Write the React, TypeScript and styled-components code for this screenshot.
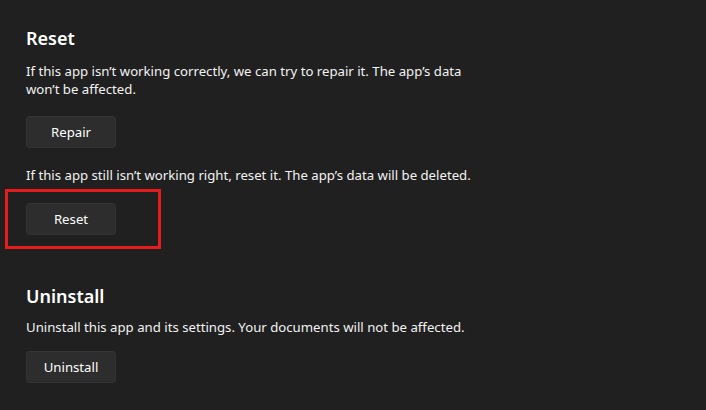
import React from "react";
import styled, { createGlobalStyle } from "styled-components";

const Global = createGlobalStyle`
  html, body { margin: 0; padding: 0; background: #202020; }
  body { font-family: "Noto Sans", "Open Sans", sans-serif; color: #ffffff; }
`;

const Page = styled.div`
  width: 706px;
  height: 410px;
  box-sizing: border-box;
  padding: 24px 26px 0 26px;
  background: #202020;
  display: flex;
  flex-direction: column;
`;

const Section = styled.section<{ $gapTop?: number }>`
  display: flex;
  flex-direction: column;
  align-items: flex-start;
  margin-top: ${(p) => p.$gapTop ?? 0}px;
`;

const Heading = styled.h2`
  margin: 0;
  font-size: 18px;
  line-height: 28px;
  font-weight: 600;
  color: #ffffff;
`;

const Text = styled.p<{ $top: number }>`
  margin: ${(p) => p.$top}px 0 0 0;
  font-size: 13.2px;
  line-height: 18px;
  color: #f2f2f2;
  max-width: 462px;
`;

const ButtonWrap = styled.div<{ $top: number }>`
  position: relative;
  margin-top: ${(p) => p.$top}px;
`;

const Button = styled.button`
  width: 90px;
  height: 32px;
  box-sizing: border-box;
  border-radius: 4px;
  background: #2d2d2d;
  border: 1px solid #323232;
  border-top-color: #363636;
  color: #ffffff;
  font-family: "Noto Sans", "Open Sans", sans-serif;
  font-size: 13.2px;
  display: flex;
  align-items: center;
  justify-content: center;
  padding: 0;
`;

const Highlight = styled.div`
  position: absolute;
  left: -21px;
  top: -14px;
  width: 156px;
  height: 60px;
  box-sizing: border-box;
  border: 3px solid #e61b1b;
  pointer-events: none;
`;

export default function App() {
  return (
    <>
      <Global />
      <Page>
        <Section>
          <Heading>Reset</Heading>
          <Text $top={10}>
            If this app isn’t working correctly, we can try to repair it. The app’s data won’t be affected.
          </Text>
          <ButtonWrap $top={18}>
            <Button>Repair</Button>
          </ButtonWrap>
          <Text $top={18}>
            If this app still isn’t working right, reset it. The app’s data will be deleted.
          </Text>
          <ButtonWrap $top={19}>
            <Button>Reset</Button>
            <Highlight />
          </ButtonWrap>
        </Section>
        <Section $gapTop={47}>
          <Heading>Uninstall</Heading>
          <Text $top={8}>
            Uninstall this app and its settings. Your documents will not be affected.
          </Text>
          <ButtonWrap $top={15}>
            <Button>Uninstall</Button>
          </ButtonWrap>
        </Section>
      </Page>
    </>
  );
}
